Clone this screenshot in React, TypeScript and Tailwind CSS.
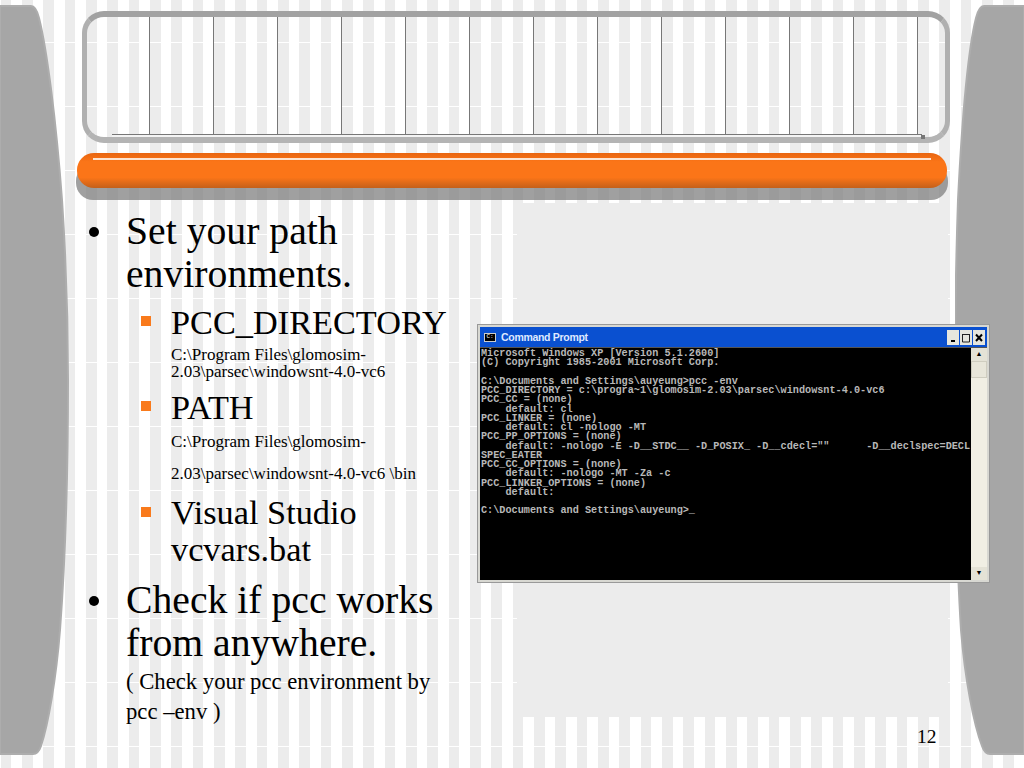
const consoleText = `Microsoft Windows XP [Version 5.1.2600]
(C) Copyright 1985-2001 Microsoft Corp.

C:\\Documents and Settings\\auyeung>pcc -env
PCC_DIRECTORY = c:\\progra~1\\glomosim-2.03\\parsec\\windowsnt-4.0-vc6
PCC_CC = (none)
    default: cl
PCC_LINKER = (none)
    default: cl -nologo -MT
PCC_PP_OPTIONS = (none)
    default: -nologo -E -D__STDC__ -D_POSIX_ -D__cdecl=""      -D__declspec=DECL
SPEC_EATER
PCC_CC_OPTIONS = (none)
    default: -nologo -MT -Za -c
PCC_LINKER_OPTIONS = (none)
    default:

C:\\Documents and Settings\\auyeung>_`;

function SideShape({ side }: { side: 'left' | 'right' }) {
  const d =
    side === 'left'
      ? 'M0 6 L31 6 C35 6 37 10 39 18 C47 50 56 120 62 200 C66 260 68 320 68 380 C68 470 66 550 60 630 C56 680 48 725 41 746 C39 752 37 754 33 754 L0 754 Z'
      : 'M69 6 L29 6 C25 6 23 10 21 18 C13 50 7 120 3 200 C1 260 0 320 0 380 C0 470 1 550 6 630 C10 680 19 725 27 746 C29 752 31 754 35 754 L69 754 Z';
  return (
    <svg
      className={
        side === 'left'
          ? 'absolute left-0 top-0 h-[768px] w-[69px]'
          : 'absolute right-0 top-0 h-[768px] w-[69px]'
      }
      viewBox="0 0 69 768"
    >
      <path d={d} fill="#a6a6a6" stroke="#adadad" strokeWidth="2" />
    </svg>
  );
}

function WinButton({ children }: { children: React.ReactNode }) {
  return (
    <span className="flex h-[15px] w-[12px] items-center justify-center bg-[#e6e6de]">
      <svg width="10" height="11" viewBox="0 0 10 11">
        {children}
      </svg>
    </span>
  );
}

function CommandWindow() {
  return (
    <div className="mt-[125px] flex h-[257px] w-[511px] flex-col border-2 border-[#d8d8d2] bg-[#0a50d0] shadow-[0_0_0_1px_#999]">
      <div className="flex h-[20px] items-center pl-[4px] pr-[2px]">
        <span className="flex h-[9px] w-[12px] items-center justify-center border border-[#ccc] bg-black font-['Liberation_Mono',monospace] text-[6px] leading-none text-white">
          C:
        </span>
        <span className="ml-[5px] flex-1 pt-[1px] font-['Liberation_Sans',sans-serif] text-[10.5px] font-bold tracking-[-0.3px] text-[#dfe9ff]">
          Command Prompt
        </span>
        <div className="flex gap-px">
          <WinButton>
            <rect x="3" y="8" width="4" height="2" fill="#000" />
          </WinButton>
          <WinButton>
            <path d="M1 2.5 H9 M1.5 2 V10 H8.5 V2" fill="none" stroke="#222" />
          </WinButton>
          <WinButton>
            <path d="M2 2.5 L8 9 M8 2.5 L2 9" fill="none" stroke="#000" strokeWidth="2" />
          </WinButton>
        </div>
      </div>
      <div className="flex flex-1 border-t border-[#555]">
        <pre className="w-[491px] flex-none overflow-hidden bg-black pl-[1px] pt-[1px] font-['Liberation_Mono',monospace] text-[10.2px] font-bold leading-[9.25px] text-[#b8b8b8]">
          {consoleText}
        </pre>
        <div className="flex flex-1 flex-col justify-between bg-[#f1efe4]">
          <div>
            <div className="flex h-[13px] items-center justify-center bg-[#e4e2d6] text-[7px] leading-none text-black">▲</div>
            <div className="h-[17px] border border-[#cfcdc0] bg-[#e8e6da]" />
          </div>
          <div className="flex h-[13px] items-center justify-center bg-[#e4e2d6] text-[7px] leading-none text-black">▼</div>
        </div>
      </div>
    </div>
  );
}

function Bullet() {
  return (
    <span className="flex h-[43px] w-[44px] flex-none items-center pl-[7px]">
      <span className="h-[10px] w-[10px] rounded-full bg-black" />
    </span>
  );
}

function SquareBullet() {
  return (
    <span className="ml-[59px] flex h-[36px] w-[30px] flex-none items-center">
      <span className="h-[10px] w-[10px] bg-[#f97a1c]" />
    </span>
  );
}

export default function App() {
  const cells = Array.from({ length: 12 });

  return (
    <div className="relative h-[768px] w-[1024px] overflow-hidden bg-white bg-[repeating-linear-gradient(90deg,#ffffff_0px,#ffffff_0.67px,#ececec_0.67px,#ececec_11.33px,#ffffff_11.33px,#ffffff_21.33px)] font-['Liberation_Serif',serif] text-black">
      {/* thin white lines across the stripes */}
      <div className="absolute inset-0 bg-[repeating-linear-gradient(180deg,transparent_0px,transparent_42px,#ffffff_42px,#ffffff_43px,transparent_43px,transparent_64px)]" />
      {/* plain grey block behind the screenshot */}
      <div className="absolute left-[517px] top-[203px] h-[514px] w-[431px] bg-[#ececec]" />
      <SideShape side="left" />
      <SideShape side="right" />

      <div className="relative flex h-full flex-col pl-[82px] pt-[11px]">
        {/* title box */}
        <div className="h-[132px] w-[868px] rounded-[22px] border-x-[5px] border-b-[6px] border-t-[6px] border-x-[#b0b0b0] border-b-[#b4b4b4] border-t-[#a2a2a2]">
          <div className="relative ml-[25px] flex h-[118px] w-[810px] border-b border-[#777]">
            <div className="w-[38px] border-r border-[#777]" />
            {cells.map((_, i) => (
              <div key={i} className="w-[64px] border-r border-[#777]" />
            ))}
            <span className="absolute bottom-[-3px] left-0 right-0 h-[2px] bg-[#f4f4f4]" />
            <span className="absolute bottom-[-5px] right-[-3px] h-[4px] w-[4px] bg-[#777]" />
          </div>
        </div>

        {/* orange bar */}
        <div className="relative -ml-[6px] mt-[10px] h-[47px] w-[872px]">
          <div className="absolute bottom-0 left-0 h-[36px] w-full rounded-[17px] bg-[#808080]/75" />
          <div className="relative ml-px h-[35px] w-[870px] rounded-[17px] bg-[linear-gradient(180deg,#e86510_0%,#fb7518_25%,#fb7518_70%,#c4601a_100%)] pt-[5px]">
            <div className="mx-[16px] h-[2px] bg-[#fde4d0]" />
          </div>
        </div>

        <div className="flex">
          {/* bullets */}
          <div className="w-[396px] flex-none pt-[10px]">
            <div className="flex text-[39.7px] leading-[43px]">
              <Bullet />
              <span>Set your path environments.</span>
            </div>
            <div className="mt-[7px] flex text-[34.3px] leading-[38px]">
              <SquareBullet />
              <span>PCC_DIRECTORY</span>
            </div>
            <p className="ml-[89px] mt-[5px] text-[17px] leading-[17px]">
              C:\Program Files\glomosim-
              <br />
              2.03\parsec\windowsnt-4.0-vc6
            </p>
            <div className="mt-[8px] flex text-[34.3px] leading-[38px]">
              <SquareBullet />
              <span>PATH</span>
            </div>
            <p className="ml-[89px] text-[17px] leading-[32px]">
              C:\Program Files\glomosim-
              <br />
              2.03\parsec\windowsnt-4.0-vc6 \bin
            </p>
            <div className="mt-[4px] flex text-[34.3px] leading-[37px]">
              <SquareBullet />
              <span>Visual Studio
                <br />
                vcvars.bat
              </span>
            </div>
            <div className="mt-[11px] flex text-[39.7px] leading-[43px]">
              <Bullet />
              <span>Check if pcc works from anywhere.</span>
            </div>
            <p className="ml-[44px] mt-[2px] text-[22.7px] leading-[30px]">
              ( Check your pcc environment by
              <br />
              pcc –env )
            </p>
          </div>
          <CommandWindow />
        </div>
      </div>

      <div className="absolute bottom-[22px] left-[917px] text-[19.5px] leading-none">12</div>
    </div>
  );
}
